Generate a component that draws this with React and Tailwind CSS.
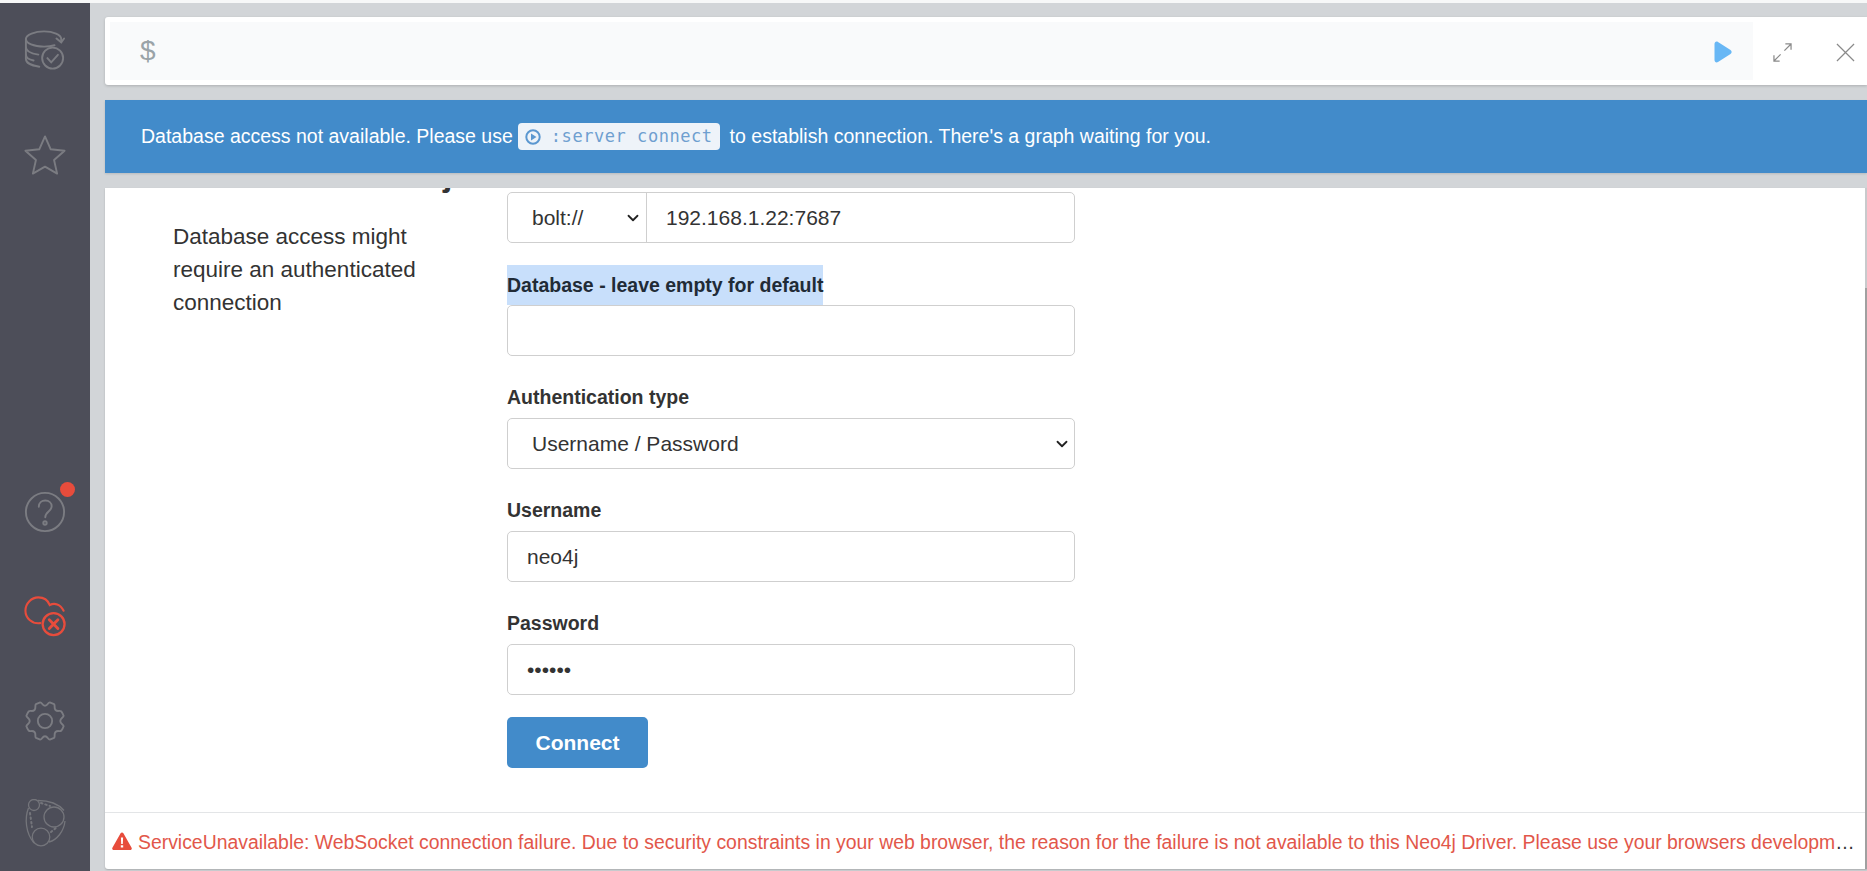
import { ChevronDown } from 'lucide-react'

const sans = 'font-["Liberation_Sans",Arial,sans-serif]'
const inputBox = 'h-[51px] w-[568px] rounded-[5px] border border-[#cfcfcf] bg-white flex items-center text-[21px] text-[#333]'

function DbIcon() {
  return (
    <svg width="42" height="42" viewBox="0 0 44 44" fill="none" stroke="#7b7c82" strokeWidth="2" strokeLinecap="round">
      <path d="M39 14v-3.500C39 6 30.500 2.500 21 2.500S2 6 2 10.500v21C2 35.500 8 38.500 16 39.500" />
      <path d="M2 10.500C2 15 10 18.500 21 18.500c4 0 8-.5 11-1.500" />
      <path d="M2 19c0 3.500 5 6.500 13 7.800M2 27c0 2.500 3 5 8 6" />
      <path d="M34 10l5 4 3-4" />
      <circle cx="30" cy="30.500" r="11" />
      <path d="M24.500 30.500l4 4.500 7-8" />
    </svg>
  )
}

function StarIcon() {
  return (
    <svg width="42" height="42" viewBox="0 0 44 44" fill="none" stroke="#7b7c82" strokeWidth="2" strokeLinejoin="round">
      <path d="M22 2.500l6 13.500 14.500 1.500-11 9.800 3.200 14.200L22 34.200 9.300 41.500l3.200-14.200-11-9.800L16 16z" />
    </svg>
  )
}

function HelpIcon() {
  return (
    <svg width="42" height="42" viewBox="0 0 44 44" fill="none" stroke="#7b7c82" strokeWidth="2" strokeLinecap="round">
      <circle cx="22" cy="22" r="20" />
      <path d="M15.500 16.500c0-4 3-6.500 6.800-6.500s6.700 2.500 6.700 6c0 5.500-6.700 5.500-6.700 11.500" />
      <circle cx="22" cy="33.500" r="1.800" />
    </svg>
  )
}

function CloudErrorIcon() {
  return (
    <svg width="42" height="42" viewBox="0 0 44 44" fill="none" stroke="#e74c3c" strokeWidth="2.200" strokeLinecap="round">
      <path d="M17 29.500C8 30.500 1.500 24 1.500 16.500 1.500 8.500 8 2.500 15 2.500c5.500 0 10 3 12 8 5-2.500 11-1 14.500 6" />
      <circle cx="31" cy="30.500" r="11.500" strokeWidth="2.400" />
      <path d="M26.500 26l9 9M35.500 26l-9 9" strokeWidth="3" />
    </svg>
  )
}

function GearIcon() {
  return (
    <svg width="42" height="42" viewBox="0 0 44 44" fill="none" stroke="#7b7c82" strokeWidth="2" strokeLinejoin="round">
      <path d="M17 2.500c2 0 2 3.500 5 3.500s3-3.500 5-3.500l4.500 1.800c1.500 1.500-.5 4.200 1.500 6.200s4.700 0 6.200 1.500c1 1.500 1.800 3 2.300 4.500 0 2-3.500 2.500-3.500 5.500s3.500 3.500 3.500 5.500c-.5 1.500-1.300 3-2.300 4.500-1.500 1.500-4.200-.5-6.200 1.500s0 4.700-1.500 6.200L27 41.500c-2 0-2-3.500-5-3.500s-3 3.500-5 3.500l-4.500-1.800c-1.500-1.500.5-4.200-1.500-6.200s-4.700 0-6.200-1.500c-1-1.500-1.800-3-2.300-4.500 0-2 3.500-2.500 3.500-5.500S2.500 18.500 2.500 16.500c.5-1.500 1.300-3 2.300-4.500 1.500-1.500 4.200.5 6.200-1.500s0-4.700 1.500-6.200z" />
      <circle cx="22" cy="22" r="7.500" />
    </svg>
  )
}

function Neo4jIcon() {
  return (
    <svg width="44" height="48" viewBox="0 0 44 48" fill="none" stroke="#74757b" strokeWidth="1.300">
      <circle cx="11" cy="6" r="5.500" />
      <circle cx="31" cy="18" r="10" />
      <circle cx="18" cy="38" r="8.800" />
      <path d="M15 1.500c11 0 20 3 26 10M42 22c-1 10-8 19-16 21M5.500 9c-4 10-3 25 5.500 35" />
      <path d="M7 14l2 14M18 4l9 3M28 33l6-5" strokeWidth="2" strokeDasharray="1.500 3" strokeLinecap="round" />
    </svg>
  )
}

function NavItem({ children, className = '' }) {
  return <div className={`relative flex justify-center ${className}`}>{children}</div>
}

function Field({ label, children, mark }) {
  return (
    <div className="flex flex-col">
      {mark ? (
        <label className="h-[40px] w-fit bg-[#c8dffb] flex items-center pt-[1px] text-[19.5px] font-bold text-[#212b36]">{label}</label>
      ) : (
        <label className="h-[40px] flex items-center text-[19.5px] font-bold text-[#333]">{label}</label>
      )}
      {children}
    </div>
  )
}

export default function App() {
  return (
    <div className={`${sans} h-[871px] w-full overflow-hidden bg-[#f7f8f8] pt-[3px]`}>
      <div className="h-[868px] flex bg-[#d2d5d8]">
        <aside className="w-[90px] shrink-0 bg-[#4d4e59] flex flex-col">
          <NavItem className="mt-[26px]"><DbIcon /></NavItem>
          <NavItem className="mt-[63px]"><StarIcon /></NavItem>
          <NavItem className="mt-[315px]">
            <HelpIcon />
            <span className="absolute left-[60px] top-[-9px] h-[15px] w-[15px] rounded-full bg-[#e74c3c]" />
          </NavItem>
          <NavItem className="mt-[62px]"><CloudErrorIcon /></NavItem>
          <NavItem className="mt-[63px]"><GearIcon /></NavItem>
          <NavItem className="mt-[57px]"><Neo4jIcon /></NavItem>
        </aside>

        <main className="flex-1 min-w-0 pl-[15px] pt-[14px] pb-[2px] flex flex-col">
          <div className="h-[68px] bg-white rounded-l-[3px] shadow-[0_1px_3px_rgba(0,0,0,0.18)] flex items-center pl-[5px]">
            <div className="h-[58px] w-[1643px] bg-[#f9fafb] flex items-center pl-[30px] pr-[21px] justify-between">
              <span className="text-[28px] font-light text-[#9aa3a8]">$</span>
              <svg width="18" height="22" viewBox="0 0 18 22" className="mt-[2px]">
                <path d="M0.500 3C0.500 1 2.300 0 4 1l12.500 8c1.500 1 1.500 3 0 4L4 21c-1.700 1-3.500 0-3.500-2z" fill="#68b7f5" />
              </svg>
            </div>
            <div className="flex-1 flex items-center pl-[20px] gap-[44px] mt-[2px]">
              <svg width="19" height="19" viewBox="0 0 20 20" fill="none" stroke="#8a8a8a" strokeWidth="1.300">
                <path d="M1 19L8 12M1 13v6h6M19 1l-7 7M13 1h6v6" />
              </svg>
              <svg width="19" height="19" viewBox="0 0 20 20" fill="none" stroke="#8a8a8a" strokeWidth="1.300">
                <path d="M1 1l18 18M19 1L1 19" />
              </svg>
            </div>
          </div>

          <div className="mt-[15px] h-[73px] bg-[#428bca] flex items-center pl-[36px] text-[19.5px] text-white shadow-[0_1px_2px_rgba(0,0,0,0.12)]">
            <span>Database access not available. Please use</span>
            <span className="ml-[5px] h-[27px] pl-[7px] pr-[7px] rounded-[4px] bg-[#eef3f9] flex items-center gap-[10px] font-['DejaVu_Sans_Mono'] text-[17px] tracking-[0.55px] text-[#6f9fd0]">
              <svg width="16" height="16" viewBox="0 0 16 16" fill="none">
                <circle cx="8" cy="8" r="6.700" stroke="#5b97d0" strokeWidth="2" />
                <path d="M6 4.500v7L11.500 8z" fill="#5b97d0" />
              </svg>
              :server connect
            </span>
            <span className="ml-[10px]">to establish connection. There's a graph waiting for you.</span>
          </div>

          <div className="relative mt-[15px] flex-1 min-h-0 bg-white rounded-bl-[3px] flex flex-col shadow-[0_1px_2px_rgba(0,0,0,0.2)]">
            <div className="absolute right-0 top-0 h-[100px] w-[2px] bg-[#c8cacc]" />
            <div className="absolute right-0 top-[100px] bottom-0 w-[2px] bg-[#a0a0a0]" />
            <div className="flex-1 min-h-0 flex pt-[4px] overflow-hidden">
              <div className="w-[402px] shrink-0 pl-[68px] text-[22.5px] leading-[33px] text-[#333]">
                <h3 className="-mt-[38px] h-[40px] text-[34px] leading-[40px] font-bold whitespace-nowrap text-[#333]">Connect to Neo4j</h3>
                <p className="mt-[26px] w-[270px]">Database access might require an authenticated connection</p>
              </div>
              <form className="flex flex-col">
                <div className={`${inputBox} overflow-hidden`}>
                  <div className="h-full w-[139px] border-r border-[#cfcfcf] flex items-center justify-between pl-[24px] pr-[4px]">
                    bolt://
                    <ChevronDown size={18} strokeWidth={2.4} className="text-[#222]" />
                  </div>
                  <span className="pl-[19px]">192.168.1.22:7687</span>
                </div>
                <div className="mt-[22px]">
                  <Field label="Database - leave empty for default" mark>
                    <div className={inputBox} />
                  </Field>
                </div>
                <div className="mt-[22px]">
                  <Field label="Authentication type">
                    <div className={`${inputBox} justify-between pl-[24px] pr-[3px]`}>
                      Username / Password
                      <ChevronDown size={18} strokeWidth={2.4} className="text-[#222]" />
                    </div>
                  </Field>
                </div>
                <div className="mt-[22px]">
                  <Field label="Username">
                    <div className={`${inputBox} pl-[19px]`}>neo4j</div>
                  </Field>
                </div>
                <div className="mt-[22px]">
                  <Field label="Password">
                    <div className={`${inputBox} pl-[19px] text-[#222]`}>••••••</div>
                  </Field>
                </div>
                <button type="button" className="mt-[22px] h-[51px] w-[141px] rounded-[5px] bg-[#428bca] text-white text-[21px] font-bold">
                  Connect
                </button>
              </form>
            </div>
            <div className="h-[57px] shrink-0 border-t border-[#e3e5e7] flex items-center pl-[7px] pr-[2px] text-[19.4px] text-[#333]">
              <svg width="20" height="18" viewBox="0 0 20 18" className="shrink-0 mr-[6px]">
                <path d="M10 0.500c.6 0 1.100.3 1.400.8l8.200 14.400c.6 1-.1 2.300-1.300 2.300H1.700c-1.200 0-1.900-1.300-1.300-2.300L8.600 1.300c.3-.5.800-.8 1.400-.8z" fill="#e74c3c" />
                <path d="M8.900 5.500h2.200l-.3 6.500H9.200zM8.800 13.300h2.400v2.300H8.800z" fill="#fff" />
              </svg>
              <p className="min-w-0 flex-1 truncate pt-[3px]">
                <span className="text-[#e2574a]">
                  ServiceUnavailable: WebSocket connection failure. Due to security constraints in your web browser, the reason for the failure is not available to this Neo4j Driver. Please use your browsers development console to determine the root cause of the failure.
                </span>
              </p>
            </div>
          </div>
        </main>
      </div>
    </div>
  )
}
